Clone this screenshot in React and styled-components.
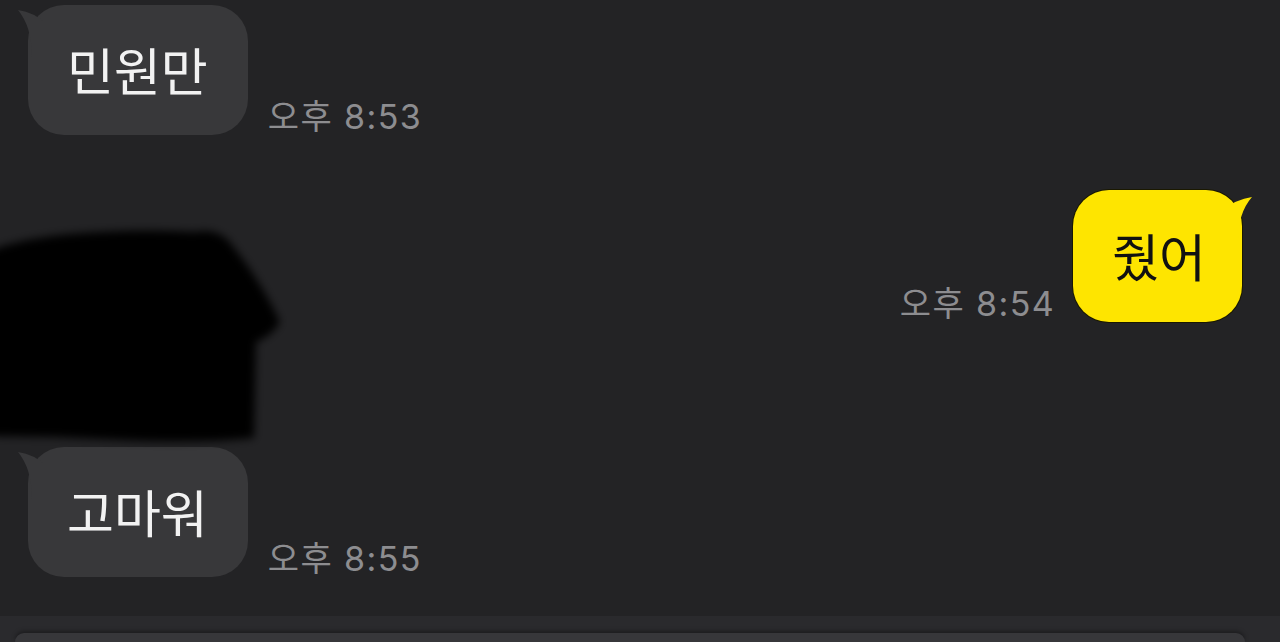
import React from 'react'
import styled, { createGlobalStyle } from 'styled-components'

const GlobalStyle = createGlobalStyle`
  html, body {
    margin: 0;
    padding: 0;
    background: #232325;
  }
  body {
    font-family: Inter, "Noto Sans CJK KR", "Noto Sans", sans-serif;
  }
`

const messages = [
  { id: 1, side: 'left', text: '민원만', time: '오후 8:53', gap: 5 },
  { id: 2, side: 'right', text: '줬어', time: '오후 8:54', gap: 55 },
  { id: 3, side: 'left', text: '고마워', time: '오후 8:55', gap: 125 },
]

function Tail({ side }) {
  if (side === 'right') {
    return (
      <TailSvg side={side} width="44" height="50" viewBox="0 0 44 50">
        <path d="M42 6 Q26 8 12 20 L12 50 L28 50 Q28 22 42 6 Z" fill="#fee500" />
      </TailSvg>
    )
  }
  return (
    <TailSvg side={side} width="44" height="50" viewBox="0 0 44 50">
      <path d="M2 3 Q18 5 32 18 L32 50 L16 50 Q16 20 2 3 Z" fill="#38383a" />
    </TailSvg>
  )
}

function App() {
  return (
    <>
      <GlobalStyle />
      <Page>
        <Messages>
          {messages.map((m) => (
            <Row key={m.id} side={m.side} style={{ marginTop: m.gap }}>
              {m.side === 'right' && <Time>{m.time}</Time>}
              <Bubble side={m.side}>
                <Tail side={m.side} />
                <BubbleText side={m.side}>{m.text}</BubbleText>
              </Bubble>
              {m.side === 'left' && <Time>{m.time}</Time>}
            </Row>
          ))}
          <Redaction width="300" height="240" viewBox="0 0 300 240">
            <defs>
              <filter id="soft" x="-20%" y="-20%" width="140%" height="140%">
                <feGaussianBlur stdDeviation="4" />
              </filter>
            </defs>
            <path
              d="M-20 32 Q20 16 70 12 Q140 6 195 10 Q215 6 228 18 Q262 60 280 100 Q272 114 256 120 L254 216 Q200 222 120 218 Q50 214 -20 214 Z"
              fill="#060606"
              filter="url(#soft)"
            />
          </Redaction>
        </Messages>
        <Footer>
          <InputBox />
        </Footer>
      </Page>
    </>
  )
}

export default App

const Page = styled.div`
  width: 1280px;
  height: 642px;
  overflow: hidden;
  background: #232325;
  display: flex;
  flex-direction: column;
`

const Messages = styled.div`
  position: relative;
  flex: 1;
  display: flex;
  flex-direction: column;
`

const Row = styled.div`
  display: flex;
  align-items: flex-end;
  gap: ${(p) => (p.side === 'right' ? '18px' : '20px')};
  justify-content: ${(p) => (p.side === 'right' ? 'flex-end' : 'flex-start')};
  padding: ${(p) => (p.side === 'right' ? '0 38px 0 0' : '0 0 0 28px')};
`

const Bubble = styled.div`
  position: relative;
  height: ${(p) => (p.side === 'right' ? '132px' : '130px')};
  padding: ${(p) => (p.side === 'right' ? '0 36px 0 39px' : '0 40px 0 39px')};
  border-radius: 36px;
  display: flex;
  align-items: center;
  background: ${(p) => (p.side === 'right' ? '#fee500' : '#38383a')};
  box-shadow: ${(p) => (p.side === 'right' ? '0 0 0 1px #1a1800' : 'none')};
`

const TailSvg = styled.svg`
  position: absolute;
  top: ${(p) => (p.side === 'right' ? '1px' : '2px')};
  ${(p) => (p.side === 'right' ? 'right: -12px;' : 'left: -12px;')}
  display: block;
`

const BubbleText = styled.span`
  position: relative;
  font-family: "Noto Sans CJK KR", sans-serif;
  font-size: 51px;
  line-height: 1;
  color: ${(p) => (p.side === 'right' ? '#111111' : '#f2f2f2')};
  margin-top: -2px;
`

const Time = styled.span`
  font-family: Inter, "Noto Sans CJK KR", sans-serif;
  font-size: 34px;
  letter-spacing: 1.4px;
  line-height: 1;
  color: #8d8d90;
  padding-bottom: 1px;
  white-space: nowrap;
`

const Redaction = styled.svg`
  position: absolute;
  left: 0;
  top: 222px;
  pointer-events: none;
`

const Footer = styled.div`
  height: 26px;
  background: #2a2a2d;
  padding: 17px 35px 0 15px;
  box-sizing: border-box;
  display: flex;
`

const InputBox = styled.div`
  flex: 1;
  background: #37373a;
  border-radius: 18px 18px 0 0;
  box-shadow: 0 -2px 4px rgba(0, 0, 0, 0.35);
`
